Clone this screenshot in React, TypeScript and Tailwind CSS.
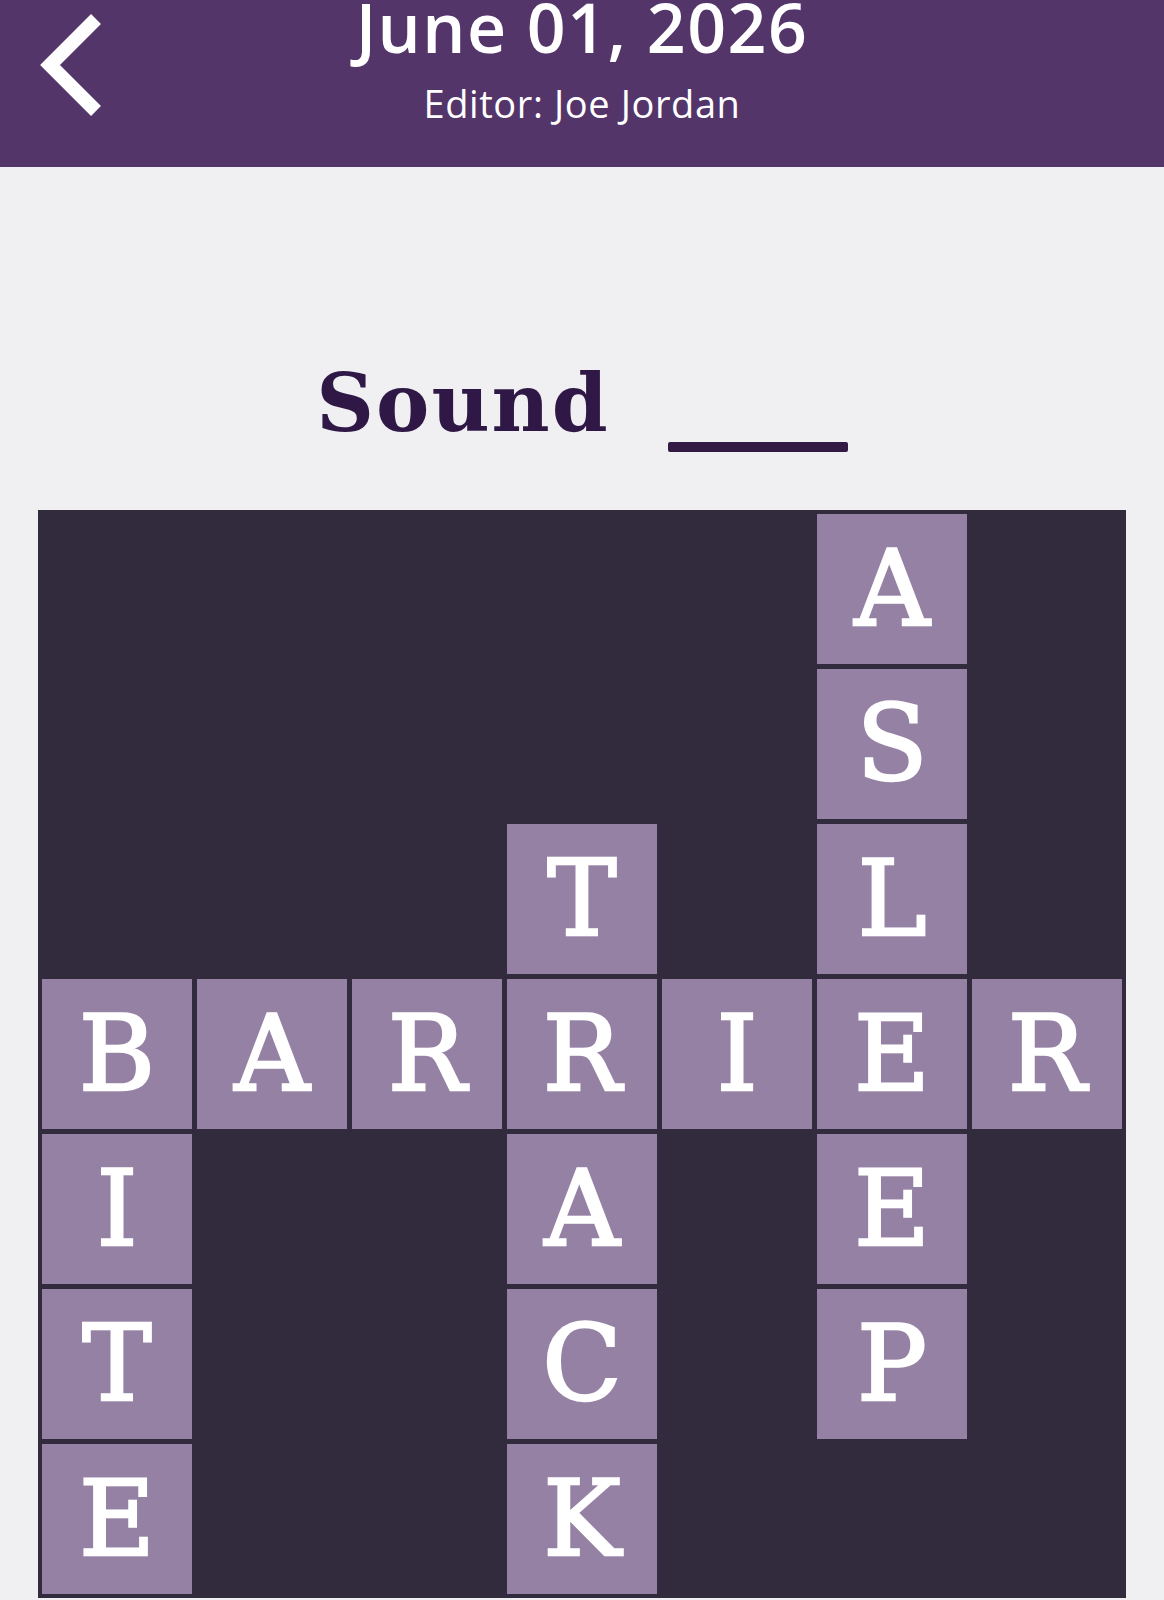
import React from "react";

// Puzzle layout: null = blocked square, string = letter tile
const GRID: (string | null)[][] = [
  [null, null, null, null, null, "A", null],
  [null, null, null, null, null, "S", null],
  [null, null, null, "T", null, "L", null],
  ["B", "A", "R", "R", "I", "E", "R"],
  ["I", null, null, "A", null, "E", null],
  ["T", null, null, "C", null, "P", null],
  ["E", null, null, "K", null, null, null],
];

function BackChevron() {
  return (
    <svg width="80" height="114" viewBox="0 0 80 114" className="block">
      <polyline
        points="66,11 20,57 66,103"
        fill="none"
        stroke="white"
        strokeWidth="14"
        strokeLinecap="butt"
        strokeLinejoin="miter"
      />
    </svg>
  );
}

function Header() {
  return (
    <header className="h-[167px] bg-[#543569] grid grid-cols-[1fr_auto_1fr]">
      <button className="justify-self-start ml-[30px] mt-[8px] self-start">
        <BackChevron />
      </button>
      <div className="flex flex-col items-center text-white font-['Open_Sans',sans-serif]">
        <h1 className="mt-[2px] text-[68px] leading-[50px] font-semibold tracking-[1.5px]">June 01, 2026</h1>
        <p className="mt-[32px] text-[38px] leading-none font-normal tracking-[0.6px]">Editor: Joe Jordan</p>
      </div>
      <div />
    </header>
  );
}

function Tile({ letter }: { letter: string | null }) {
  if (!letter) return <div className="w-[150px] h-[150px]" />;
  return (
    <div className="w-[150px] h-[150px] bg-[#9481a3] flex items-center justify-center">
      <span className="text-white font-['DejaVu_Serif',serif] text-[104px] leading-none [-webkit-text-stroke:2.5px_white]">
        {letter}
      </span>
    </div>
  );
}

export default function App() {
  return (
    <div className="min-h-screen bg-[#f0f0f3]">
      <Header />

      <main className="flex flex-col items-center">
        {/* clue */}
        <div className="mt-[186px] flex items-end gap-[58px] text-[#2f1846]">
          <span className="font-['DejaVu_Serif',serif] font-bold text-[80px] leading-[100px] tracking-[2px]">Sound</span>
          <span className="mb-[1px] w-[180px] h-[10px] rounded-[2px] bg-[#321a45]" />
        </div>

        {/* board */}
        <div className="mt-[57px] w-[1088px] h-[1088px] bg-[#322a3d] p-[4px] grid grid-cols-7 gap-[5px]">
          {GRID.flatMap((row, r) =>
            row.map((cell, c) => <Tile key={`${r}-${c}`} letter={cell} />)
          )}
        </div>
      </main>
    </div>
  );
}
